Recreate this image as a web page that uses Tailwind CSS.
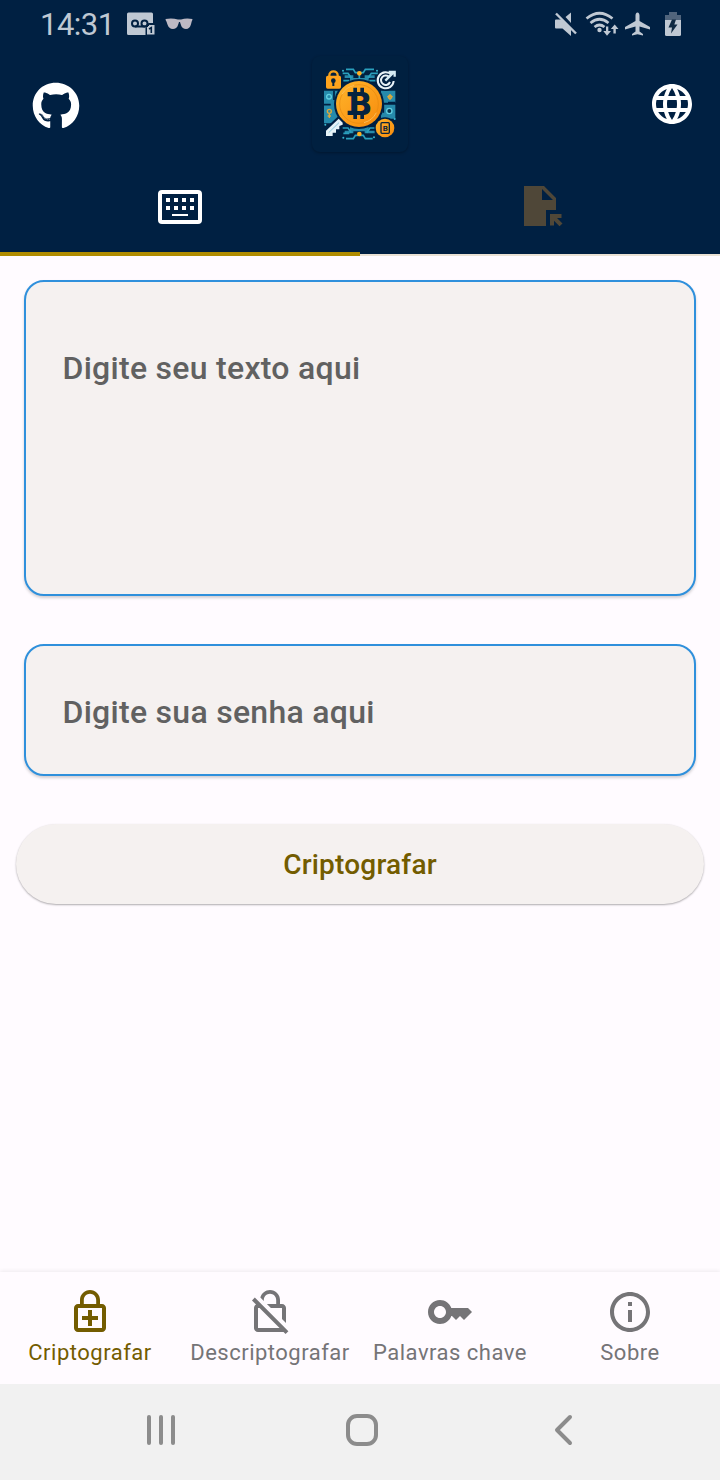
<!DOCTYPE html>
<html lang="pt-BR">
<head>
<meta charset="utf-8">
<title>Criptografar</title>
<script src="https://cdn.jsdelivr.net/npm/@tailwindcss/browser@4"></script>
</head>
<body class="flex h-[1480px] w-[720px] flex-col overflow-hidden bg-[#fffbff] font-[Roboto,sans-serif]">
<header class="bg-[#002042]">
  <!-- Status bar -->
  <div class="flex h-12 items-center justify-between pr-[36px] pl-10 text-[#bfc8d3]">
    <div class="flex items-center">
      <span class="w-[86px] pt-0.5 text-[31px] leading-[46px] tracking-[-0.5px]">14:31</span>
      <svg class="h-12 w-[76px]" viewBox="126 0 76 48" fill="none">
        <path d="M128.500 12.500H151.500Q153 12.500 153 14V23H148.500L145.500 26V35H128.500Q127 35 127 33.500V14Q127 12.500 128.500 12.500Z" fill="#bfc8d3"/>
        <circle cx="135" cy="23.500" r="3" stroke="#002042" stroke-width="2"/><circle cx="144.500" cy="23.500" r="3" stroke="#002042" stroke-width="2"/><path d="M135 26.500H145" stroke="#002042" stroke-width="2"/>
        <path d="M149.500 24.500H155V35H146.500V27.500Z" fill="#bfc8d3" stroke="#002042" stroke-width="1"/>
        <path d="M149 29L151.300 27.700V33" stroke="#002042" stroke-width="1.600"/>
        <path d="M165.500 19Q172 17.800 178 19.500H181Q186 17.800 192.500 19L192 21C191 22 191.500 28.800 186 29C181.500 29 181 25 180 22H179C178 25 177.500 29 173 29C167 28.800 167.500 22 166 21Z" fill="#bdb9c4"/>
      </svg>
    </div>
    <svg class="h-12 w-[130px]" viewBox="554 0 130 48" fill="#bfc8d3">
      <path d="M555 20.500Q555 19.500 556 19.500H562L571 28.500V36L562.500 28.500H556Q555 28.500 555 27.500ZM565.500 17L571 12.500V23Z"/>
      <path d="M556 13.500L576 33.500" stroke="#bfc8d3" stroke-width="2.400"/>
      <g fill="none" stroke="#bfc8d3" stroke-width="2.700"><path d="M586.500 18.500Q599.500 8 612.500 18.500"/><path d="M590.500 23Q599.500 15.500 608.500 23"/><path d="M594.500 27Q599.500 23 604.500 27"/></g>
      <circle cx="599.500" cy="30" r="2.200"/>
      <path d="M606 26.500V31H603.300L607 35.700L611 31H608.300V26.500ZM613.400 33.500V29H610.800L614.700 24.500L618.500 29H615.800V33.500Z"/>
      <path d="M637.500 12.500C638.800 12.500 639.500 14 639.500 15.500V21L650 27V29.500L639.500 26.500V31.500L643 34V35.500L637.500 34.200L632 35.500V34L635.500 31.500V26.500L625 29.500V27L635.500 21V15.500C635.500 14 636.200 12.500 637.500 12.500Z"/>
      <path d="M669 12H677V15H681V20H665V15H669Z" fill="#50647c"/>
      <path d="M665 20H681V34.500Q681 36 679.500 36H666.500Q665 36 665 34.500Z"/>
      <path d="M672 19.500H676L674.300 24.500H677.500L671 33.500L672 27.500H668.500Z" fill="#102a43"/>
    </svg>
  </div>
  <!-- App bar -->
  <div class="flex h-28 items-center justify-between pr-6 pl-8">
    <svg class="mt-[3px] h-12 w-12" viewBox="-8 0 512 512" fill="#fff"><path d="M165.900 397.400c0 2-2.300 3.600-5.200 3.600-3.300.3-5.600-1.300-5.600-3.600 0-2 2.300-3.600 5.200-3.600 3-.3 5.600 1.300 5.600 3.600zm-31.100-4.500c-.7 2 1.300 4.300 4.300 4.900 2.600 1 5.600 0 6.200-2s-1.300-4.300-4.300-5.200c-2.600-.7-5.500.3-6.200 2.300zm44.200-1.700c-2.900.7-4.900 2.600-4.600 4.900.3 2 2.900 3.300 5.900 2.600 2.900-.7 4.900-2.600 4.600-4.600-.3-1.900-3-3.200-5.900-2.900zM244.800 8C106.100 8 0 113.300 0 252c0 110.900 69.800 205.800 169.500 239.200 12.800 2.300 17.300-5.600 17.300-12.100 0-6.200-.3-40.400-.3-61.400 0 0-70 15-84.700-29.800 0 0-11.400-29.100-27.800-36.600 0 0-22.900-15.700 1.600-15.400 0 0 24.900 2 38.600 25.800 21.900 38.600 58.600 27.500 72.900 20.900 2.300-16 8.800-27.100 16-33.700-55.900-6.200-112.300-14.300-112.300-110.500 0-27.500 7.600-41.300 23.600-58.900-2.600-6.500-11.100-33.300 2.600-67.900 20.900-6.500 69 27 69 27 20-5.600 41.500-8.500 62.800-8.500s42.800 2.900 62.800 8.500c0 0 48.100-33.600 69-27 13.700 34.700 5.200 61.400 2.600 67.900 16 17.700 25.800 31.500 25.800 58.900 0 96.500-58.900 104.200-114.800 110.500 9.200 7.900 17 22.900 17 46.400 0 33.700-.3 75.400-.3 83.600 0 6.500 4.600 14.400 17.300 12.100C428.200 457.800 496 362.900 496 252 496 113.300 383.500 8 244.800 8zM97.200 352.900c-1.300 1-1 3.300.7 5.200 1.600 1.600 3.900 2.300 5.200 1 1.300-1 1-3.300-.7-5.200-1.600-1.600-3.900-2.300-5.200-1zm-10.800-8.100c-.7 1.300.3 2.900 2.300 3.900 1.600 1 3.600.7 4.300-.7.7-1.300-.3-2.900-2.300-3.900-2-.6-3.600-.3-4.300.7zm32.400 35.600c-1.600 1.300-1 4.300 1.300 6.200 2.300 2.300 5.200 2.600 6.500 1 1.300-1.300.7-4.300-1.300-6.200-2.200-2.300-5.200-2.600-6.500-1zm-11.400-14.700c-1.600 1-1.600 3.600 0 5.900 1.600 2.300 4.300 3.300 5.600 2.300 1.600-1.300 1.600-3.900 0-6.200-1.400-2.300-4-3.300-5.600-2z"/></svg>
    <div class="mr-2 flex h-24 w-24 items-center justify-center rounded-lg bg-[#002040] shadow-[0_1px_3px_rgba(0,0,0,0.3)]">
      <svg class="h-24 w-24" viewBox="36 18 288 288">
        <defs><linearGradient id="coin" x1="0" y1="0" x2="1" y2="1"><stop offset="0" stop-color="#ffb52b"/><stop offset="1" stop-color="#f78a0c"/></linearGradient></defs>
        <g fill="#268aab">
          <path d="M72 122H118V220H72ZM243 122H286V158H243ZM243 164H286V206H243Z"/>
          <path d="M134 76H160V84H134ZM194 76H224V84H194ZM134 242H160V250H134ZM194 242H224V250H194ZM150 84H206V98H150ZM150 228H206V244H150Z"/>
        </g>
        <g fill="none" stroke="#2aa0bd" stroke-width="5">
          <path d="M138 58H160L166 68H190L196 58H222M128 70H144L154 84M234 70H214L204 84M178 72V96M130 92H148M208 92H230"/>
          <path d="M138 266H160L166 256H190L196 266H218M128 234H144L154 248M226 234H210L200 248M130 250H148"/>
        </g>
        <g fill="#38b6cf"><circle cx="129" cy="62" r="3"/><circle cx="231" cy="62" r="3"/><circle cx="76" cy="224" r="3"/><circle cx="284" cy="207" r="3"/><circle cx="130" cy="263" r="3"/><circle cx="222" cy="262" r="3"/></g>
        <path d="M72 164H92M102 122V150M264 158H286M250 164V188" stroke="#002042" stroke-width="5"/>
        <circle cx="87" cy="140" r="7" fill="none" stroke="#62d0e2" stroke-width="4"/><circle cx="268" cy="183" r="8" fill="#07344f" stroke="#62d0e2" stroke-width="4"/>
        <g fill="none" stroke="#d9a83c" stroke-width="4"><circle cx="88" cy="184" r="6"/><path d="M88 190V204M83 198H93M262 140H278M270 132V150"/><circle cx="270" cy="141" r="5"/></g>
        <circle cx="178" cy="70" r="7" fill="#ffad20"/><circle cx="178" cy="252" r="7" fill="#ffad20"/>
        <circle cx="177" cy="162" r="75" fill="#002042"/>
        <circle cx="177" cy="162" r="69" fill="url(#coin)"/>
        <circle cx="177" cy="162" r="58" fill="none" stroke="#e58a10" stroke-width="2"/>
        <path d="M126 133A58 58 0 0 1 163 106M229 188A58 58 0 0 1 192 218" fill="none" stroke="#ffd27a" stroke-width="2"/>
        <path d="M160 113H171V130H160ZM181 113H192V130H181ZM160 190H171V207H160ZM181 190H192V207H181ZM143 126H160V139H143ZM143 182H160V195H143Z" fill="#06233f"/>
        <text x="181" y="195" text-anchor="middle" font-family="DejaVu Sans, sans-serif" font-weight="700" font-size="95" fill="#06233f">B</text>
        <path d="M88 82V76C88 60 113 60 113 76V82" fill="none" stroke="#f5a21b" stroke-width="7"/>
        <rect x="78" y="77" width="45" height="39" rx="5" fill="#ffa41d"/>
        <circle cx="100" cy="92" r="7" fill="#06233f"/><path d="M97 92H103V108H97Z" fill="#06233f"/>
        <circle cx="257" cy="92" r="31" fill="#002042"/>
        <path d="M275 75A24 24 0 1 0 281 93M268 82A14 14 0 1 0 270 96" fill="none" stroke="#e8f2f7" stroke-width="6"/>
        <path d="M256 92L280 68M266 66H284V80" fill="none" stroke="#d5ebf4" stroke-width="7"/>
        <path d="M76 262V240L116 202L132 218L121 228V238H111V248H100V258H92Z" fill="#002042" stroke="#002042" stroke-width="7"/>
        <path d="M78 258V242L116 206L128 218V224L118 228V238H108V248H98V258Z" fill="#e6f3f8"/><path d="M86 248L117 218" stroke="#8cc9df" stroke-width="3"/>
        <circle cx="255" cy="234" r="32" fill="#002042"/><circle cx="255" cy="234" r="28" fill="url(#coin)"/>
        <rect x="243" y="218" width="25" height="32" rx="3" fill="none" stroke="#06233f" stroke-width="4"/>
        <text x="256" y="243" text-anchor="middle" font-family="Roboto, sans-serif" font-weight="700" font-size="24" fill="#06233f">B</text>
      </svg>
    </div>
    <svg class="h-12 w-12" viewBox="0 0 24 24" fill="#fff"><path d="M11.990 2C6.470 2 2 6.480 2 12s4.470 10 9.990 10C17.520 22 22 17.520 22 12S17.520 2 11.990 2zm6.930 6h-2.950c-.32-1.250-.78-2.450-1.380-3.560 1.840.63 3.370 1.910 4.330 3.560zM12 4.040c.83 1.200 1.480 2.530 1.910 3.960h-3.820c.43-1.430 1.080-2.760 1.910-3.960zM4.260 14C4.100 13.360 4 12.690 4 12s.1-1.360.26-2h3.380c-.08.66-.14 1.320-.14 2s.06 1.340.14 2H4.260zm.82 2h2.950c.32 1.250.78 2.450 1.380 3.560-1.840-.63-3.370-1.900-4.330-3.560zm2.950-8H5.080c.96-1.660 2.490-2.930 4.330-3.560C8.810 5.550 8.350 6.750 8.030 8zM12 19.960c-.83-1.200-1.480-2.530-1.910-3.960h3.820c-.43 1.430-1.080 2.760-1.910 3.960zM14.340 14H9.660c-.09-.66-.16-1.320-.16-2s.07-1.350.16-2h4.680c.09.65.16 1.320.16 2s-.07 1.340-.16 2zm.25 5.560c.6-1.110 1.060-2.310 1.380-3.560h2.950c-.96 1.650-2.490 2.930-4.330 3.560zM16.360 14c.08-.66.14-1.320.14-2s-.06-1.340-.14-2h3.380c.16.64.26 1.310.26 2s-.1 1.360-.26 2h-3.380z"/></svg>
  </div>
  <!-- Tabs -->
  <div class="grid h-24 grid-cols-2">
    <div class="flex justify-center border-b-4 border-[#b08c00] pt-[22px]">
      <svg class="h-12 w-12" viewBox="156 182 48 48" fill="#fff"><rect x="160" y="192" width="40" height="30" rx="2" fill="none" stroke="#fff" stroke-width="4"/><path d="M166 198h4v4h-4zM174 198h4v4h-4zM182 198h4v4h-4zM190 198h4v4h-4zM166 206h4v4h-4zM174 206h4v4h-4zM182 206h4v4h-4zM190 206h4v4h-4zM172 214h16v2h-16z"/></svg>
    </div>
    <div class="flex justify-center border-b-2 border-[#eae1d4] pt-[22px]">
      <svg class="h-12 w-12" viewBox="516 182 48 48" fill="#4f4738"><path fill-rule="evenodd" d="M524 186H544L556 198V210H546V226H524ZM542 189V200H553Z"/><path d="M550 214H561.500V218H557L562.500 223.500L559.500 226.300L554 220.800V225.500H550Z"/></svg>
    </div>
  </div>
</header>
<main class="flex flex-1 flex-col px-4 pt-6">
  <div class="mx-2 h-[316px] rounded-[20px] border-2 border-[#2f90dc] bg-[#f5f1f0] px-[36.5px] pt-[67px] text-[32px] leading-[38px] font-medium tracking-[0.28px] text-[#616161] shadow-[0_2px_3px_rgba(0,0,0,0.18)]">Digite seu texto aqui</div>
  <div class="mx-2 mt-12 flex h-[132px] items-center rounded-[20px] border-2 border-[#2f90dc] bg-[#f5f1f0] px-[36.5px] pt-1 text-[32px] leading-[38px] font-medium tracking-[0.28px] text-[#616161] shadow-[0_2px_3px_rgba(0,0,0,0.18)]">Digite sua senha aqui</div>
  <button class="mt-12 h-20 rounded-full bg-[#f5f1f0] pt-0.5 text-[28px] font-medium tracking-[0.2px] text-[#735c00] shadow-[0_1px_2px_rgba(0,0,0,0.32)]">Criptografar</button>
</main>
<!-- Bottom navigation -->
<nav class="grid h-28 grid-cols-4 bg-[#fffbff] pt-4 text-[22px] leading-[26px] tracking-[0.5px] whitespace-nowrap text-[#757477] shadow-[0_-1px_4px_rgba(0,0,0,0.07)]">
  <div class="flex flex-col items-center gap-1 text-[#735c00]">
    <svg class="h-12 w-12" viewBox="0 0 24 24" fill="currentColor"><path d="M18 8h-1V6c0-2.760-2.240-5-5-5S7 3.240 7 6v2H6c-1.100 0-2 .9-2 2v10c0 1.100.9 2 2 2h12c1.100 0 2-.9 2-2V10c0-1.100-.9-2-2-2zM8.900 6c0-1.710 1.390-3.100 3.100-3.100s3.100 1.390 3.100 3.100v2H8.900V6zM18 20H6V10h12v10zm-7-1h2v-3h3v-2h-3v-3h-2v3H8v2h3z"/></svg>
    <span>Criptografar</span>
  </div>
  <div class="flex flex-col items-center gap-1">
    <svg class="h-12 w-12" viewBox="0 0 24 24" fill="currentColor"><path d="M8.900 6c0-1.710 1.390-3.100 3.100-3.100s3.100 1.390 3.100 3.100v2h-4.660l2 2H18v5.560l2 2V10c0-1.100-.9-2-2-2h-1V6c0-2.760-2.240-5-5-5-2.320 0-4.260 1.590-4.820 3.740L8.900 6.460V6zM4.410 4.810L3 6.220l2.040 2.040C4.420 8.600 4 9.250 4 10v10c0 1.100.9 2 2 2h12.780l1 1 1.410-1.410L4.410 4.810zM6 20V10h.78l10 10H6z"/></svg>
    <span>Descriptografar</span>
  </div>
  <div class="flex flex-col items-center gap-1">
    <svg class="h-12 w-12" viewBox="0 0 24 24" fill="currentColor"><path d="M21 10h-8.350C11.830 7.670 9.610 6 7 6c-3.310 0-6 2.690-6 6s2.690 6 6 6c2.610 0 4.830-1.670 5.650-4H13l2 2 2-2 2 2 4-4.040L21 10zM7 15c-1.650 0-3-1.350-3-3s1.350-3 3-3 3 1.350 3 3-1.350 3-3 3z"/></svg>
    <span>Palavras chave</span>
  </div>
  <div class="flex flex-col items-center gap-1">
    <svg class="h-12 w-12" viewBox="0 0 24 24" fill="currentColor"><path d="M11 7h2v2h-2zm0 4h2v6h-2zm1-9C6.480 2 2 6.480 2 12s4.480 10 10 10 10-4.480 10-10S17.520 2 12 2zm0 18c-4.410 0-8-3.590-8-8s3.590-8 8-8 8 3.590 8 8-3.590 8-8 8z"/></svg>
    <span>Sobre</span>
  </div>
</nav>
<!-- System navigation -->
<div class="flex h-24 items-center justify-between bg-[#f1f1f1] pr-[142px] pb-1 pl-[147px] text-[#8c8c8c]">
  <svg class="h-8 w-7" viewBox="147 1414 28 32" fill="currentColor"><rect x="147" y="1415" width="4" height="30" rx="2"/><rect x="159" y="1415" width="4" height="30" rx="2"/><rect x="171" y="1415" width="4" height="30" rx="2"/></svg>
  <svg class="mr-1.5 h-8 w-8" viewBox="0 0 32 32" fill="none" stroke="currentColor" stroke-width="4"><rect x="2" y="2" width="28" height="28" rx="9"/></svg>
  <svg class="h-8 w-6" viewBox="554 1414 24 32" fill="none" stroke="currentColor" stroke-width="4" stroke-linecap="round" stroke-linejoin="round"><path d="M570 1417L557 1430L570 1443"/></svg>
</div>
</body>
</html>
